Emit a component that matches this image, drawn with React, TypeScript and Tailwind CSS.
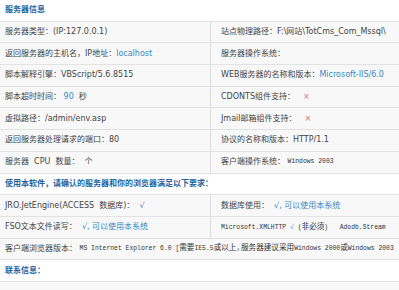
const cjk = "font-['Verdana','DejaVu_Sans','Noto_Sans_CJK_SC',sans-serif]";
const mono = "font-['Liberation_Mono','Noto_Sans_CJK_SC',monospace]";

function Blue({ children }: { children: React.ReactNode }) {
  return <span className="text-[#3b87c4]">{children}</span>;
}

function Cross() {
  return <span className="ml-2 text-[#e36a6a]">×</span>;
}

// Chinese inside the monospaced lines is set a bit larger than the Latin
function Han({ children }: { children: React.ReactNode }) {
  return <span className="text-[7.6px]">{children}</span>;
}

function Header({ children }: { children: React.ReactNode }) {
  return (
    <div className="flex h-[21.7px] items-center border-b border-[#e2e2e2] bg-white pl-[5px] text-[8px] font-bold text-[#1d63a0]">
      {children}
    </div>
  );
}

function Row({ left, right }: { left: React.ReactNode; right?: React.ReactNode }) {
  return (
    <div className="flex h-[21.7px] border-b border-[#e2e2e2] bg-[#f8f8f8] text-[8px] text-[#444]">
      <div className={`flex items-center whitespace-nowrap pl-[5px] ${right === undefined ? "flex-1 overflow-hidden" : "w-[211px] border-r border-[#dcdcdc]"}`}>
        {left}
      </div>
      {right !== undefined && (
        <div className="flex flex-1 items-center overflow-hidden whitespace-nowrap pl-[10px]">{right}</div>
      )}
    </div>
  );
}

export default function App() {
  return (
    <div className={`h-[290px] w-[399px] overflow-hidden bg-white ${cjk}`}>
      <Header>服务器信息</Header>
      <Row left="服务器类型：(IP:127.0.0.1)" right="站点物理路径：F:\网站\TotCms_Com_Mssql\" />
      <Row left={<>返回服务器的主机名，IP地址：<Blue>localhost</Blue></>} right="服务器操作系统：" />
      <Row left="脚本解释引擎：VBScript/5.6.8515" right={<>WEB服务器的名称和版本：<Blue>Microsoft-IIS/6.0</Blue></>} />
      <Row left={<>脚本超时时间：<Blue>&nbsp;90&nbsp;</Blue>&nbsp;秒</>} right={<>CDONTS组件支持：<Cross /></>} />
      <Row left="虚拟路径：/admin/env.asp" right={<>Jmail邮箱组件支持：<Cross /></>} />
      <Row left="返回服务器处理请求的端口：80" right="协议的名称和版本：HTTP/1.1" />
      <Row
        left={<>服务器&nbsp;&nbsp;CPU&nbsp;&nbsp;数量：&nbsp;&nbsp;个</>}
        right={<>客户端操作系统：&nbsp;<span className={`${mono} text-[6.4px] text-[#333]`}>Windows 2003</span></>}
      />
      <Header>使用本软件，请确认的服务器和你的浏览器满足以下要求：</Header>
      <Row
        left={<>JRO.JetEngine(ACCESS&nbsp;&nbsp;数据库)：&nbsp;&nbsp;<Blue>√</Blue></>}
        right={<>数据库使用：&nbsp;&nbsp;<Blue>√, 可以使用本系统</Blue></>}
      />
      <Row
        left={<>FSO文本文件读写：&nbsp;&nbsp;<Blue>√, 可以使用本系统</Blue></>}
        right={
          <span className={`${mono} text-[6.4px] text-[#333]`}>
            Microsoft.XMLHTTP <Blue>√</Blue> (<Han>非必须</Han>)&nbsp;&nbsp;&nbsp;Adodb.Stream
          </span>
        }
      />
      <Row
        left={
          <>
            客户端浏览器版本：&nbsp;
            <span className={`${mono} text-[6.4px] text-[#333]`}>
              MS Internet Explorer 6.0 [<Han>需要</Han>IE5.5<Han>或以上,服务器建议采用</Han>Windows 2000<Han>或</Han>Windows 2003
            </span>
          </>
        }
      />
      <Header>联系信息：</Header>
      <div className="h-[21.7px] border-b border-[#e2e2e2] bg-[#f8f8f8]" />
    </div>
  );
}
